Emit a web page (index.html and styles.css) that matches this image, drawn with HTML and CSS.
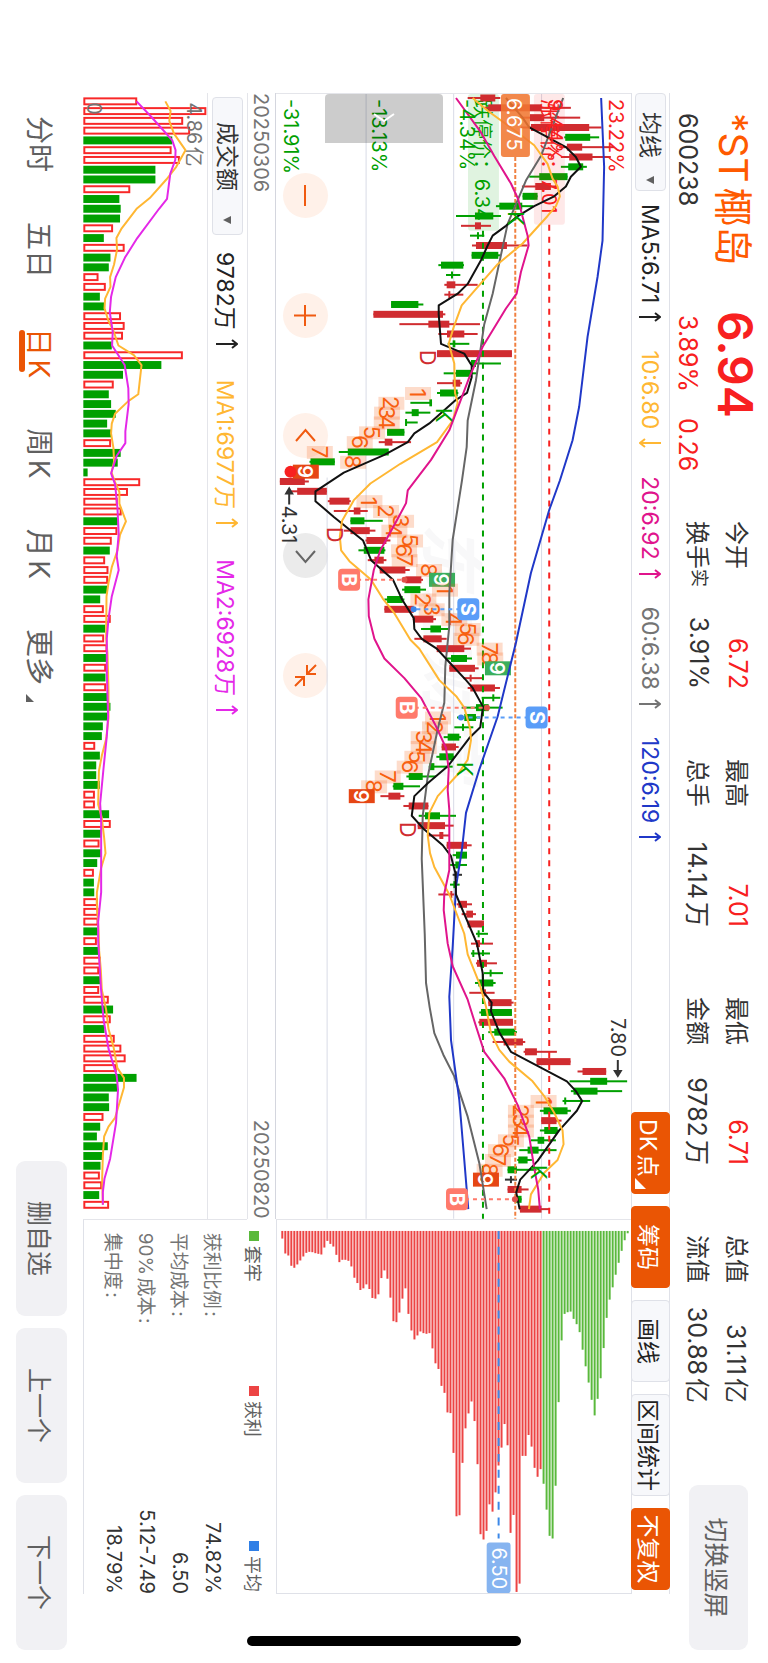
FILE: index.html
```html
<!DOCTYPE html>
<html lang="zh-CN">
<head>
  <meta charset="UTF-8" />
  <meta name="viewport" content="width=device-width, initial-scale=1.0" />
  <title>*ST椰岛 600238</title>
  <link rel="stylesheet" href="styles.css">
</head>
<body>
  <div class="terminal">
    <header class="quote">
      <div class="stock">
        <h1>*ST椰岛</h1>
        <strong class="price">6.94</strong>
        <span class="code">600238</span>
        <span class="change"><span>3.89%</span><span>0.26</span></span>
      </div>
      <dl class="stats">
        <div><dt>今开</dt><dd class="up">6.72</dd></div>
        <div><dt>最高</dt><dd class="up">7.01</dd></div>
        <div><dt>最低</dt><dd class="up">6.71</dd></div>
        <div><dt>总值</dt><dd>31.11亿</dd></div>
        <div><dt>换手<sup>实</sup></dt><dd>3.91%</dd></div>
        <div><dt>总手</dt><dd>14.14万</dd></div>
        <div><dt>金额</dt><dd>9782万</dd></div>
        <div><dt>流值</dt><dd>30.88亿</dd></div>
      </dl>
      <button class="soft-btn switch-btn">切换竖屏</button>
    </header>

    <main class="board">
      <div class="toolbar">
        <label class="picker">
          <select aria-label="主图指标"><option>均线</option></select>
        </label>
        <div class="legend">
          <span class="ma5">MA5:6.71<svg viewBox="0 0 10 22"><path d="M5 22V1M1 6L5 1L9 6"/></svg></span>
          <span class="ma10">10:6.80<svg viewBox="0 0 10 22"><path d="M5 0V21M1 16L5 21L9 16"/></svg></span>
          <span class="ma20">20:6.92<svg viewBox="0 0 10 22"><path d="M5 22V1M1 6L5 1L9 6"/></svg></span>
          <span class="ma60">60:6.38<svg viewBox="0 0 10 22"><path d="M5 22V1M1 6L5 1L9 6"/></svg></span>
          <span class="ma120">120:6.19<svg viewBox="0 0 10 22"><path d="M5 22V1M1 6L5 1L9 6"/></svg></span>
        </div>
        <div class="tools">
          <button class="tool active has-more">DK点</button>
          <button class="tool active">筹码</button>
          <button class="tool">画线</button>
          <button class="tool wide">区间统计</button>
          <button class="tool active">不复权</button>
        </div>
      </div>

      <section class="kline">
        <div class="controls">
          <button aria-label="缩小"><svg viewBox="0 0 45 45"><path d="M12 23H33"/></svg></button>
          <button aria-label="放大"><svg viewBox="0 0 45 45"><path d="M12 23H33M22.500 12V34"/></svg></button>
          <button aria-label="左移"><svg viewBox="0 0 45 45"><path d="M28 13L17 22.500L28 32"/></svg></button>
          <button aria-label="右移" class="disabled"><svg viewBox="0 0 45 45"><path d="M18 13L29 22.500L18 32"/></svg></button>
          <button aria-label="收起"><svg viewBox="0 0 45 45"><path d="M12 21H21V12M21 21L12 12M33 24H24V33M24 24L33 33"/></svg></button>
        </div>
        <svg id="kline" viewBox="0 0 1126 355"></svg>
        <button class="drawer" aria-label="展开"><svg viewBox="0 0 49 118"><path d="M20 49L27 59L20 69"/></svg></button>
      </section>

      <section class="chips"><svg id="chips" viewBox="0 0 375 355"></svg></section>

      <div class="dates"><span>20250306</span><span>20250820</span></div>
      <div class="chip-legend">
        <span class="trapped">套牢</span>
        <span class="profit">获利</span>
        <span class="average">平均</span>
      </div>

      <div class="volume-bar">
        <label class="picker">
          <select aria-label="副图指标"><option>成交额</option></select>
        </label>
        <div class="legend">
          <span class="ma5">9782万<svg viewBox="0 0 10 22"><path d="M5 22V1M1 6L5 1L9 6"/></svg></span>
          <span class="ma10">MA1:6977万<svg viewBox="0 0 10 22"><path d="M5 22V1M1 6L5 1L9 6"/></svg></span>
          <span class="vma2">MA2:6928万<svg viewBox="0 0 10 22"><path d="M5 22V1M1 6L5 1L9 6"/></svg></span>
        </div>
      </div>
      <section class="volume"><svg id="volume" viewBox="0 0 1126 125"></svg></section>

      <dl class="chip-stats">
        <div><dt>获利比例:</dt><dd>74.82%</dd></div>
        <div><dt>平均成本:</dt><dd>6.50</dd></div>
        <div><dt>90%成本:</dt><dd>5.12-7.49</dd></div>
        <div><dt>集中度:</dt><dd>18.79%</dd></div>
      </dl>
    </main>

    <footer class="bottom">
      <nav class="periods">
        <a href="#">分时</a>
        <a href="#">五日</a>
        <a href="#" class="current">日K</a>
        <a href="#">周K</a>
        <a href="#">月K</a>
        <a href="#" class="more">更多</a>
      </nav>
      <div class="actions">
        <button class="soft-btn">删自选</button>
        <button class="soft-btn">上一个</button>
        <button class="soft-btn">下一个</button>
      </div>
    </footer>

    <div class="home-indicator"></div>
  </div>

  <script src="charts.js"></script>
</body>
</html>
```
FILE: styles.css
```css
* {
  box-sizing: border-box;
  padding: 0;
  margin: 0;
}

html, body {
  height: 100%;
  overflow: hidden;
}

body {
  font-family: Inter, "Noto Sans CJK SC", sans-serif;
  text-autospace: normal;
  background: #fff;
  color: #333;
}

button, select {
  font: inherit;
  color: inherit;
  border: none;
  background: none;
  cursor: pointer;
}

a {
  color: inherit;
  text-decoration: none;
}

svg {
  display: block;
  width: 100%;
  height: 100%;
}

/* landscape screen on a portrait device */
.terminal {
  position: relative;
  display: flex;
  flex-direction: column;
  width: 100vh;
  height: 100vw;
  transform-origin: 0 0;
  transform: translateX(100vw) rotate(90deg);
}

/* quote header */
.quote {
  display: flex;
  align-items: flex-start;
  height: 98px;
  padding: 0 13px 0 113px;
}

.stock {
  display: grid;
  grid-template-columns: 198px 210px;
  grid-template-rows: 64px 32px;
  align-items: center;
}

h1 {
  font-size: 39px;
  font-weight: 400;
  color: #ff5a00;
  white-space: nowrap;
}

.price {
  font-size: 48px;
  font-weight: 600;
  color: #f82020;
}

.code, .change {
  font-size: 25px;
}

.change {
  display: flex;
  gap: 26px;
  padding-left: 4px;
  color: #f82020;
}

.stats {
  display: grid;
  grid-template-columns: repeat(4, 168px);
  grid-template-rows: 39px 39px;
  column-gap: 70px;
  padding-top: 10px;
  font-size: 24px;
}

.stats div {
  display: flex;
  justify-content: space-between;
  align-items: center;
  white-space: nowrap;
}

.stats dd {
  font-size: 25px;
}

.stats sup {
  font-size: 18px;
  line-height: 18px;
  vertical-align: 4px;
}

.up {
  color: #f82020;
}

.soft-btn {
  width: 155px;
  height: 51px;
  border-radius: 9px;
  background: #f1f1f4;
  color: #606060;
  font-size: 25px;
}

.switch-btn {
  width: 165px;
  height: 59px;
  margin: 20px 0 0 auto;
}

/* charts */
.board {
  flex: 1;
  display: grid;
  grid-template-columns: 3fr 1fr;
  grid-template-rows: 39px 1fr 29px 39px 125px;
  margin: 0 69px 0 93px;
}

.toolbar {
  grid-column: 1 / 3;
  display: flex;
  align-items: center;
  border-top: 1px solid #dfe1e8;
  border-bottom: 1px solid #dfe1e8;
}

.picker {
  position: relative;
  display: flex;
  align-items: center;
  width: 98px;
  height: 31px;
  padding-left: 18px;
  border: 1px solid #dfe1e8;
  border-radius: 4px;
  background: #f7f8fb;
}

.picker select {
  width: 100%;
  appearance: none;
  outline: none;
  font-size: 23px;
  line-height: 28px;
}

.picker::after {
  content: "";
  position: absolute;
  right: 6px;
  border: 4px solid transparent;
  border-top: 8px solid #606060;
  border-bottom: none;
}

.legend {
  display: flex;
  gap: 28px;
  padding-left: 13px;
  font-size: 23px;
  text-autospace: no-autospace;
  white-space: nowrap;
}

.legend span {
  display: flex;
  align-items: center;
  gap: 9px;
}

.legend svg {
  width: 10px;
  height: 22px;
  fill: none;
  stroke: currentColor;
  stroke-width: 2;
}

.ma5 { color: #222; }
.ma10 { color: #ffb733; }
.ma20 { color: #e0148c; }
.ma60 { color: #747474; }
.ma120 { color: #2038c8; }
.vma2 { color: #e428e8; }

.tools {
  display: flex;
  gap: 12px;
  margin: -1px 4px -1px auto;
}

.tool {
  position: relative;
  width: 82px;
  height: 39px;
  border: 1px solid #dfe1e8;
  border-radius: 4px;
  background: #f7f8fb;
  color: #222;
  font-size: 23px;
  white-space: nowrap;
}

.tool.wide {
  width: 102px;
}

.tool.active {
  border-color: #ea5504;
  background: #ea5504;
  color: #fff;
}

.has-more {
  padding-right: 10px;
}

.has-more::after {
  content: "";
  position: absolute;
  right: 4px;
  bottom: 3px;
  border-left: 11px solid transparent;
  border-bottom: 11px solid #fff;
}

.kline {
  position: relative;
  border-left: 1px solid #e4e5ea;
}

.kline > svg {
  position: relative;
  pointer-events: none;
}

.controls {
  position: absolute;
  left: 79px;
  top: 303px;
  display: flex;
  gap: 75px;
}

.controls button {
  width: 45px;
  height: 45px;
  border-radius: 50%;
  background: #fff1e9;
  color: #f05a10;
}

.controls .disabled {
  background: #ebebeb;
  color: #666;
}

.controls path, .drawer path {
  fill: none;
  stroke: currentColor;
  stroke-width: 2;
}

.drawer {
  position: absolute;
  left: 0;
  top: 188px;
  width: 49px;
  height: 118px;
  border-radius: 4px 0 0 4px;
  background: rgba(0, 0, 0, 0.2);
  color: #fff;
}

.chips {
  border-left: 1px solid #e4e5ea;
  border-right: 1px solid #dfe1e8;
  border-bottom: 1px solid #dfe1e8;
}

.dates {
  display: flex;
  justify-content: space-between;
  align-items: center;
  border-top: 1px solid #d4d6de;
  border-bottom: 1px solid #e4e5ea;
  font-size: 20px;
  color: #747474;
}

.chip-legend {
  display: flex;
  justify-content: space-between;
  align-items: center;
  padding: 14px 2px 0 12px;
  font-size: 18px;
  color: #606060;
}

.chip-legend span {
  display: flex;
  align-items: center;
  gap: 5px;
}

.chip-legend span::before {
  content: "";
  width: 10px;
  height: 10px;
  background: #5ab93c;
}

.chip-legend .profit::before { background: #ec4444; }
.chip-legend .average::before { background: #2f7fe6; }

.volume-bar {
  grid-column: 1;
  display: flex;
  align-items: center;
}

.volume-bar .picker {
  width: 138px;
  margin-left: 4px;
  padding-left: 24px;
}

.volume-bar .picker::after {
  right: 10px;
}

.volume-bar .legend {
  gap: 31px;
  padding-left: 17px;
}

.volume {
  grid-column: 1;
  border-top: 1px solid #e4e5ea;
}

.chip-stats {
  grid-column: 2;
  grid-row: 4 / 6;
  padding: 17px 0 0 13px;
  border-left: 1px solid #e4e5ea;
  border-bottom: 1px solid #dfe1e8;
}

.chip-stats div {
  display: flex;
  justify-content: space-between;
  align-items: center;
  height: 33px;
}

.chip-stats dt {
  font-size: 19px;
  color: #747474;
}

.chip-stats dd {
  font-size: 20px;
}

/* bottom tabs */
.bottom {
  display: flex;
  align-items: center;
  justify-content: space-between;
  height: 83px;
  padding: 0 13px 0 116px;
}

.periods {
  display: flex;
  gap: 50px;
  font-size: 28px;
  color: #606060;
}

.periods a {
  position: relative;
}

.periods .current {
  color: #ea5504;
}

.periods .current::after {
  content: "";
  position: absolute;
  left: 2px;
  right: 6px;
  bottom: -2px;
  height: 6px;
  border-radius: 3px;
  background: #ea5504;
}

.periods .more::after {
  content: "";
  position: absolute;
  right: -17px;
  bottom: 5px;
  border-left: 8px solid transparent;
  border-bottom: 8px solid #606060;
}

.actions {
  display: flex;
  gap: 12px;
}

.home-indicator {
  position: absolute;
  right: 17px;
  top: 50%;
  width: 10px;
  height: 274px;
  margin-top: -137px;
  border-radius: 5px;
  background: #000;
}

/* svg parts */
.grid { stroke: #d8dbe6; stroke-width: 1; }
.line { fill: none; stroke-width: 2; stroke-linejoin: round; }
.axis { font-size: 20px; }
.mark { font-size: 22px; }
.count { font-size: 22px; fill: #f86010; text-anchor: middle; }
.count.nine { fill: #fff; font-weight: 600; font-size: 20px; }
.flag { font-size: 20px; font-weight: 700; fill: #fff; text-anchor: middle; }
.watermark { font-size: 64px; font-weight: 700; font-style: italic; fill: #f8f8f9; }
```
FILE: charts.js
```js
const RED = '#d02c30', GREEN = '#00a000';
const STEP = 9.844;
const cx = i => 4 + i * STEP;

// levels are thirds of a pixel above the chart floor (-325)
const py = t => (740 - t) / 3;

// colour, low, body from, body to, high
const candles = `r250,288,333,348 r300,312,472,560 r400,437,480,588 r410,440,615,652 g540,543,618,645
r525,548,594,690 r530,555,625,680 g530,552,597,608 g435,465,550,550 r413,453,500,520
g415,415,460,460 g335,345,414,447 g215,272,327,350 r230,272,290,320 g257,278,284,300
r263,275,368,430 g262,262,342,347 g162,170,237,239 g185,200,206,228 r180,187,213,280
r180,192,198,237 g20,20,102,117 r-33,-33,176,183 r45,132,195,287 r162,188,240,280
g190,205,213,255 r158,158,383,383 g258,260,275,350 g178,215,262,275 r158,205,228,233
g158,167,220,222 g78,135,143,143 g63,82,103,138 g62,62,68,100 g8,8,60,60
r-17,1,24,80 g-137,-110,13,13 g-225,-222,-149,-149 r-290,-285,-278,-270 r-314,-314,-239,-227
r-280,-262,-173,-173 r-170,-165,-105,-101 r-152,-92,-72,-50 g-102,-102,-60,-5 r-122,-102,-44,-27
r-57,-54,6,18 g-78,-62,0,3 r-50,-30,-2,6 r-14,-14,63,76 r58,63,111,116
g53,60,108,125 g0,8,55,60 r0,0,88,88 r85,88,147,155 g110,138,170,193
r90,117,172,187 r155,157,240,260 g188,200,248,263 r195,195,272,283 r237,256,262,297
r250,258,332,347 g292,325,330,348 g232,275,313,355 g218,240,275,287 g210,234,239,267
g178,190,225,230 r172,172,215,223 g156,165,208,210 g133,135,150,205 g66,73,115,155
g25,27,57,107 r-12,12,48,60 r57,73,132,132 g103,122,167,215 r100,100,182,208
r130,165,177,195 r187,187,248,262 g205,215,248,248 g195,213,226,248 k205,213,219,233
g197,207,213,226 r162,198,204,210 r217,222,248,263 r232,246,266,275 r250,250,299,299
g275,280,286,311 r260,275,287,326 g260,265,270,317 r275,278,308,338 g298,316,322,356
g272,282,327,334 r255,298,305,331 r312,312,382,388 g285,290,383,383 r282,285,386,386
g312,330,393,398 r325,358,416,423 r418,422,458,518 r457,457,559,559 r580,595,666,666
g556,618,669,729 g560,568,640,714 g535,540,546,618 g467,478,550,560 r471,471,517,532
g467,480,520,522 g440,460,480,515 g405,430,463,517 g399,402,430,443 g370,370,398,457
k362,378,383,398 r370,370,412,433 g390,392,412,412 r405,407,472,497`.split(/\s+/);

// moving averages: bar index, level
const averages = [
  ['#666', '0,537 5.9,470 8.4,425 12.8,370 19.9,325 23,300 28.7,275 32.8,250 35.5,247 38.9,233 44.9,205 50.4,195 53.7,195 57.8,183 61.5,180 64.2,160 69,130 73,115 77.4,112 79.9,115 85,121 90,125 92.5,136 95.1,150 97.3,177 99.5,210 103.6,250 108.3,285 113,307'],
  ['#2038c8', '0,651 7,660 14.5,655 18.2,640 24.3,610 31.4,585 34.8,565 38.9,527 41.9,495 48.3,440 55.4,395 62.9,340 68.3,285 72.7,245 76.4,233 80.2,215 86.3,205 91.4,195 95.8,200 101.9,225 108,240 113,252'],
  ['#111', '0,365 2,415 3,435 3.8,480 5,545 6,575 7,590 8,560 9,545 10,510 11,450 12.1,397 13,365 14,325 15,310 16.5,290 18.9,250 19.9,220 21.1,163 22,163 25,170 26,240 27.2,262 28.4,262 30,248 30.7,215 33.1,135 34.1,90 35,70 36.3,0 38.1,-122 40,-207 41,-207 42.6,-152 45,-64 47,-40 49,26 51,53 52.9,88 54,90 55,112 56,157 57.2,190 59.2,245 60,265 61.9,296 64,288 65.1,255 67.9,192 69.7,130 71,90 73,82 74.4,120 76,175 77.1,200 78.8,213 81,215 83,240 86,278 89,295 90.9,297 92,322 92.9,320 95,345 97,380 100,548 101,575 102,594 103,578 105,525 108.1,460 110,408 111.3,396 113,406'],
  ['#ffb733', '0,265 1.3,310 3.5,400 4.8,450 6.7,490 8.2,505 9,520 10,527 11,515 12,490 14.8,415 16.9,340 21.1,232 23.3,208 25,193 27,210 30,212 31,220 32.8,205 35,158 37.2,48 39.2,-42 40.9,-92 43,-127 44.6,-134 46,-130 47.1,-105 49,-40 50.9,-5 52.4,30 55.1,78 56,105 59.2,165 60.9,217 62,240 64.2,258 65.3,260 67.3,250 68.8,220 71,160 72.7,135 75,130 76.8,137 78.2,150 81,195 85,240 87.1,250 90,285 92.4,305 95.1,320 96.8,345 98,375 100,445 101.5,480 103.2,510 105,535 106.4,538 108,520 109.3,480 111.5,440 113,434'],
  ['#e0148c', '0,215 3.5,290 5.9,330 8.7,380 10.3,402 12.1,415 14,430 15,433 17.7,410 19.9,397 21.4,365 25.3,295 28.4,255 33.8,195 36.8,140 39.9,70 41.2,65 43.1,35 46,-12 48,-32 51,-48 52.7,-47 55,-30 57,0 59,60 61,110 63.9,155 66.1,185 68.3,193 70.4,190 72.4,195 78.5,195 80.9,180 82.6,178 86,190 88.3,205 91.7,250 94.4,275 97,300 99.7,360 102.4,400 105.6,435 108.8,450 111,462 113,467']
];

// nine-turn counts: first bar, levels of 1..9, colour of the nine
const turns = [
  [30, [101, 21, 8, 7, -37, -74, -194, -94, -236], '#e64614'],
  [41, [-45, 5, 50, 30, 77, 59, 61, 134, 173], '#3aae5c'],
  [50, [182, 117, 142, 210, 250, 246, 316, 318, 341], '#3aae5c'],
  [63, [161, 152, 118, 118, 99, 76, 10, -31, -68], '#e64614'],
  [102, [478, 410, 410, 410, 380, 350, 341, 316, 305], '#e64614']
];

const polyline = (pts, y, color) =>
  `<polyline class="line" stroke="${color}" points="${pts.split(' ').map(p => {
    const [i, v] = p.split(',').map(Number);
    return cx(i).toFixed(1) + ',' + y(v).toFixed(1);
  }).join(' ')}"/>`;

const text = (cls, x, y, str, fill) =>
  `<text class="${cls}" x="${x}" y="${y}"${fill ? ` fill="${fill}"` : ''}>${str}</text>`;

function drawKline() {
  let s = '';
  s += text('watermark', 430, 203, '东方财富');
  [472, 208, -55].forEach(t => {
    s += `<line class="grid" x1="0" x2="1126" y1="${py(t)}" y2="${py(t)}"/>`;
  });
  s += `<line class="grid" x1="384" x2="1126" y1="${py(-172)}" y2="${py(-172)}"/>`;

  // lower limit price stays under the candles
  s += `<rect x="0" y="${py(344)}" width="137" height="31" rx="3" fill="${GREEN}" opacity=".12"/>`;
  s += text('axis', 5, py(273), '跌停价：6.34', GREEN);

  candles.forEach((c, i) => {
    const color = { r: RED, g: GREEN, k: '#333' }[c[0]];
    const [lo, a, b, hi] = c.slice(1).split(',').map(Number);
    s += `<g fill="${color}"><rect x="${cx(i) - 1}" y="${py(hi)}" width="2" height="${(hi - lo) / 3}"/>`
      + `<rect x="${cx(i) - 3.500}" y="${py(b)}" width="7" height="${Math.max(2, (b - a) / 3)}"/></g>`;
  });

  s += `<rect x="0" y="${py(542)}" width="131" height="31" rx="3" fill="#f82020" opacity=".1"/>`;
  s += text('axis', 5, py(473), '涨停价：7.01', '#f82020');

  [[495, '#f82020', '6 6', 131], [296, GREEN, '6 6', 137], [393, '#f08040', '4 2', 63]].forEach(([t, color, dash, x]) => {
    s += `<line x1="${x}" x2="1126" y1="${py(t)}" y2="${py(t)}" stroke="${color}" stroke-width="2" stroke-dasharray="${dash}"/>`;
  });

  turns.forEach(([start, levels, nine]) => {
    levels.forEach((t, n) => {
      const x = cx(start + n), last = n === 8;
      s += last
        ? `<rect x="${x - 7}" y="${py(t) - 13}" width="14" height="26" fill="${nine}"/>`
        : `<rect x="${x - 6}" y="${py(t) - 13}" width="13" height="26" fill="#f86010" opacity=".22"/>`;
      s += text(last ? 'count nine' : 'count', x, py(t) + 8, n + 1);
    });
  });

  averages.forEach(([color, pts]) => { s += polyline(pts, py, color); });

  [[12, 395], [32, 180], [68, 242], [109, 463]].forEach(([i, t]) => {
    s += text('mark', cx(i) - 5, py(t) + 8, 'K', GREEN);
  });
  [[26, 130], [44, -148], [74, 70]].forEach(([i, t]) => {
    s += text('mark', cx(i) - 4, py(t) + 8, 'D', RED);
  });

  // buy and sell flags: bar, flag level, dot level
  [['B', 49, -106, 60], ['B', 62, 67, 308], ['B', 112, 218, 392], ['S', 52, 252, 88], ['S', 63, 457, 230]].forEach(([f, i, t, dot]) => {
    const color = f === 'B' ? '#ff7a6b' : '#5a9df8';
    s += `<line x1="${cx(i)}" x2="${cx(i)}" y1="${py(t)}" y2="${py(dot)}" stroke="${color}" stroke-width="2" stroke-dasharray="4 4"/>`;
    s += `<circle cx="${cx(i)}" cy="${py(dot)}" r="3" fill="${f === 'B' ? '#e0504a' : '#3c86ea'}"/>`;
    s += `<rect x="${cx(i) - 11}" y="${py(t) - 11}" width="22" height="22" rx="4" fill="${color}"/>`;
    s += text('flag', cx(i), py(t) + 7, f);
  });

  s += `<circle cx="${cx(38)}" cy="${py(-282)}" r="6" fill="#f82020"/>`;
  s += text('axis', 412, py(-287) + 7, '4.31', '#333');
  s += `<path d="M411 342H396M400 339L395 342L400 345Z" stroke="#333" stroke-width="2" fill="#333"/>`;
  s += text('axis', 925, py(702) + 7, '7.80', '#333');
  s += `<path d="M967 13H982M978 10L983 13L978 16Z" stroke="#333" stroke-width="2" fill="#333"/>`;

  s += `<rect x="0" y="${py(437)}" width="63" height="29" rx="3" fill="#f07832" opacity=".88"/>`;
  s += text('axis', 4, py(392) + 8, '6.675', '#fff');
  s += text('axis', 5, py(695) + 7, '23.22%', '#f82020');
  s += text('axis', 5, py(512) + 7, '9.44%', '#f82020');
  s += text('axis', 5, py(249) + 7, '-4.34%', GREEN);
  s += text('axis', 5, py(-17) + 7, '-13.13%', GREEN);
  s += text('axis', 5, py(-281) + 7, '-31.91%', GREEN);
  document.getElementById('kline').innerHTML = s;
}

const volumes = `r412 r621 r551 r572 g518 r516 r541 g467 g467 r391 g358 g362 g360 r339 g311 r374 g331 g326 r295
r317 g299 g313 r363 r374 r369 g335 r550 g485 g369 r341 g326 g333 g347 g321 g335 r333 g362 g353 g262 r421 r384
r353 r365 g353 r352 r335 g329 r315 r325 r324 g321 g300 r311 r332 g315 r312 r322 g318 r318 g316 r318 g322 g331
g322 g308 g305 r285 g299 g288 g288 g299 r284 r284 g327 r332 g303 r298 g303 g291 r281 g281 g282 r293 r295 r295
g293 r290 g294 r302 r297 g303 r297 r326 g339 r332 g313 r344 r364 r377 r350 g410 g352 g326 g327 r310 g300 g290
g323 g308 g301 r299 r306 g297 r327`.split(/\s+/);

const volumeAverages = [
  ['#ffb733', '0,497 1,513 2,509 3.3,523 5,558 6.7,530 8,500 9.9,450 11,410 13,365 14,349 15.2,351 16.7,342 18,330 19,331 20.2,315 21.2,313 22.5,325 23.5,340 25,355 26,402 27,425 30,415 30.7,385 32,345 33,335 34,333 35.5,340 36.9,342 38,334 39,345 40,358 41.2,358 43,378 44.4,360 46,352 47.7,335 49.3,325 50.7,319 55,318 56.5,322 60.2,325 63.2,325 65.3,318 67,305 68.6,296 72,294 73.4,305 75.4,312 77,316 78.5,303 81,290 82.2,290 85,295 87,297 89,302 91,305 93,318 95,325 96.8,340 99,352 100,372 101,372 104.1,345 105,325 106,312 108,308 110.3,306 113,308'],
  ['#e428e8', '0,410 1.6,455 4,518 5,528 6,527 7.4,512 10,502 11,478 14,412 16,375 18,347 20,333 21.6,329 23.6,338 25,336 27,374 29.4,385 31,386 33.8,376 35,376 36.3,350 38.1,333 39.2,345 41.6,352 44.3,356 46.6,350 48,356 50.7,335 53,325 55,320 58.5,320 63,324 65,320 68.3,310 71.9,300 73.7,303 77,303 81,303 84,294 86,294 90.7,302 94,310 97,325 99.8,350 101.2,354 104.6,348 108.3,330 110.3,313 111.7,308 113,308']
];

function drawVolume() {
  const vy = v => (623 - v) / 3;
  let s = '';
  volumes.forEach((v, i) => {
    const h = (v.slice(1) - 249) / 3, x = cx(i) - 4, y = 124.667 - h;
    s += v[0] === 'g'
      ? `<rect x="${x}" y="${y}" width="8" height="${h}" fill="${GREEN}"/>`
      : `<rect x="${x + 1}" y="${y + 1}" width="6" height="${h - 2}" fill="#fff" stroke="#f82828" stroke-width="2"/>`;
  });
  s += text('axis', 5, 20, '4.86亿', '#747474');
  s += text('axis', 5, 121, '0', '#747474');
  volumeAverages.forEach(([color, pts]) => { s += polyline(pts, vy, color); });
  document.getElementById('volume').innerHTML = s;
}

// chip distribution, lowest price first
const chips = [56, 101, 107, 138, 144, 134, 122, 110, 99, 96, 97, 100, 102, 104, 83, 63, 72, 80, 105, 127, 120, 120,
  123, 140, 174, 190, 211, 206, 194, 208, 235, 237, 224, 175, 152, 177, 234, 305, 308, 279, 237, 206, 283, 333, 360,
  348, 336, 341, 343, 341, 387, 432, 449, 500, 521, 580, 582, 702, 893, 890, 732, 628, 583, 547, 606, 736, 947, 963,
  937, 857, 879, 821, 740, 686, 615, 679, 943, 889, 1121, 1096, 711, 711, 648, 683, 747, 774, 751,
  795, 873, 952, 960, 801, 549, 363, 283, 278, 276, 298, 314, 338, 391, 441, 490, 542, 589, 539, 477, 386, 295, 240,
  203, 165, 129, 93, 61, 40];

function drawChips() {
  let s = '';
  chips.forEach((end, n) => {
    const y = py(-310 + n * 9.052);
    s += `<rect x="11" y="${y - 1}" width="${(end - 33) / 3}" height="2" fill="${n < 87 ? '#ec4444' : '#5ab93c'}"/>`;
  });
  s += `<line x1="11" x2="320" y1="${py(342)}" y2="${py(342)}" stroke="#3c88e8" stroke-width="2" stroke-dasharray="8 8"/>`;
  s += `<rect x="324" y="${py(378)}" width="51" height="24" rx="3" fill="#86b4f0"/>`;
  s += text('axis', 329, py(342) + 7, '6.50', '#fff');
  document.getElementById('chips').innerHTML = s;
}

drawKline();
drawVolume();
drawChips();
```
